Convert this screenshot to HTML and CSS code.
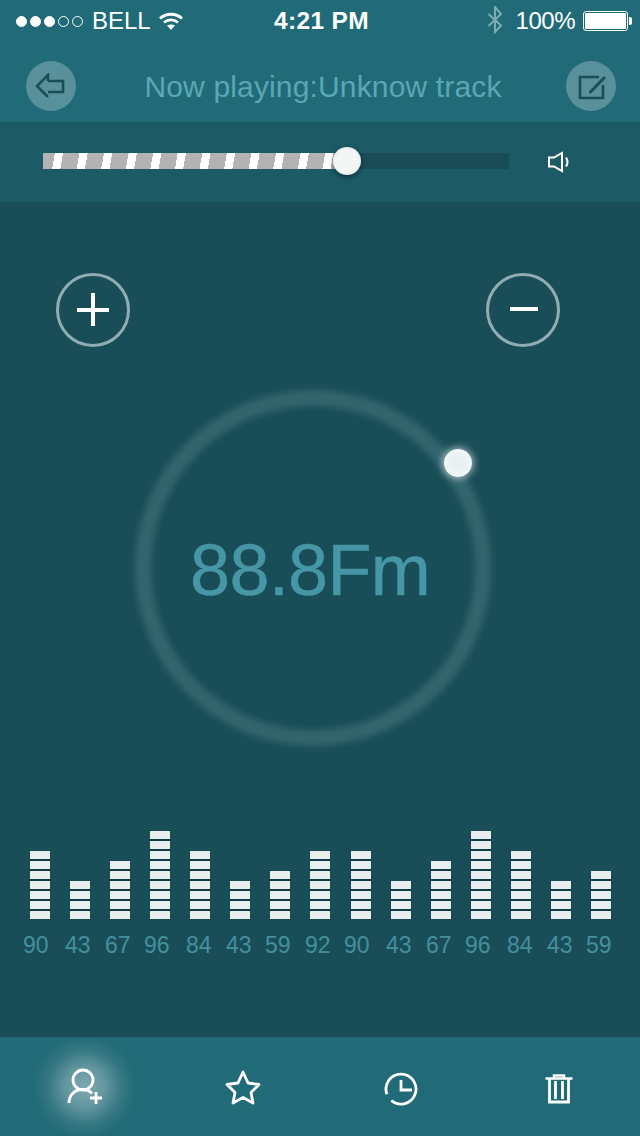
FILE: index.html
```html
<!DOCTYPE html>
<html lang="en">
<head>
  <meta charset="UTF-8">
  <title>Radio</title>
  <link rel="stylesheet" href="styles.css">
</head>
<body>

<div class="top">
  <div class="status">
    <div class="status-left">
      <span class="dots"><i class="dot on"></i><i class="dot on"></i><i class="dot on"></i><i class="dot"></i><i class="dot"></i></span>
      <span class="carrier">BELL</span>
      <svg class="wifi" width="24" height="18" viewBox="0 0 24 18">
        <path d="M1 6.500C7 .8 17 .8 23 6.500" fill="none" stroke="#fff" stroke-width="2.800"/>
        <path d="M5 10.500C9 7 15 7 19 10.500" fill="none" stroke="#fff" stroke-width="2.800"/>
        <path d="M8 13.500C10.500 12 13.500 12 16 13.500L12 18z" fill="#fff"/>
      </svg>
    </div>
    <div class="clock">4:21 PM</div>
    <div class="status-right">
      <svg class="bt" width="16" height="28" viewBox="0 0 16 28">
        <path d="M1.500 8L14 19.500 8 26V1l6 7L1.500 20" fill="none" stroke="#7fabb3" stroke-width="2"/>
      </svg>
      <span class="percent">100%</span>
      <span class="battery"><span class="battery-fill"></span></span>
    </div>
  </div>

  <div class="nav">
    <button class="round" type="button">
      <svg width="32" height="26" viewBox="0 0 32 26">
        <path d="M13 8V2L2 13l11 11M13 8h15v11H13" fill="none" stroke="#194e58" stroke-width="2.600"/>
      </svg>
    </button>
    <div class="title">Now playing:Unknow track</div>
    <button class="round" type="button">
      <svg width="30" height="28" viewBox="0 0 30 28">
        <path d="M23 5H4v21h23V13" fill="none" stroke="#194e58" stroke-width="2.600"/>
        <path d="M13.500 21L29 5" fill="none" stroke="#194e58" stroke-width="3"/>
      </svg>
    </button>
  </div>
</div>

<div class="volume">
  <div class="track">
    <div class="track-fill"></div>
    <div class="knob"></div>
  </div>
  <svg class="speaker" width="24" height="22" viewBox="0 0 24 22">
    <path d="M2 6.500h5L15 2v18l-8-4.500H2z" fill="none" stroke="#fff" stroke-width="2"/>
    <path d="M19 6.500c2 3 2 6 0 9" fill="none" stroke="#fff" stroke-width="2"/>
  </svg>
</div>

<div class="main">
  <div class="tune">
    <button class="circle" type="button"><span class="plus"></span></button>
    <button class="circle" type="button"><span class="minus"></span></button>
  </div>

  <div class="dial">
    <div class="ring"></div>
    <div class="freq">88.8Fm</div>
    <div class="dial-knob"></div>
  </div>

  <div class="bars">
    <div class="bar h7"></div>
    <div class="bar h4"></div>
    <div class="bar h6"></div>
    <div class="bar h9"></div>
    <div class="bar h7"></div>
    <div class="bar h4"></div>
    <div class="bar h5"></div>
    <div class="bar h7"></div>
    <div class="bar h7 bar-shift"></div>
    <div class="bar h4"></div>
    <div class="bar h6"></div>
    <div class="bar h9"></div>
    <div class="bar h7"></div>
    <div class="bar h4"></div>
    <div class="bar h5"></div>
  </div>

  <div class="nums">
    <span class="num w42">90</span>
    <span class="num">43</span>
    <span class="num w39">67</span>
    <span class="num w42">96</span>
    <span class="num">84</span>
    <span class="num w39">43</span>
    <span class="num">59</span>
    <span class="num w39">92</span>
    <span class="num w42">90</span>
    <span class="num">43</span>
    <span class="num w39">67</span>
    <span class="num w42">96</span>
    <span class="num">84</span>
    <span class="num w39">43</span>
    <span class="num">59</span>
  </div>
</div>

<div class="tabs">
  <div class="tab tab-active">
    <svg class="tab-icon" width="38" height="38" viewBox="0 0 38 38">
      <circle cx="17" cy="12" r="10" fill="none" stroke="#fff" stroke-width="2.800"/>
      <path d="M3 35c0-8 6-13.500 13-13.500 4 0 8 1.500 10 4" fill="none" stroke="#fff" stroke-width="2.800"/>
      <path d="M24 30h12M30 24v12" fill="none" stroke="#fff" stroke-width="2.800"/>
    </svg>
  </div>
  <div class="tab">
    <svg class="tab-icon" width="38" height="36" viewBox="0 0 38 36">
      <path d="M19 3l5 11 11 1.500-8 8 2 10.500-10-5.500L9 34l2-10.500-8-8L14 14z" fill="none" stroke="#fff" stroke-width="2.800" stroke-linejoin="round"/>
    </svg>
  </div>
  <div class="tab">
    <svg class="tab-icon icon-low" width="36" height="36" viewBox="0 0 36 36">
      <path d="M3.900 23.200A15 15 0 1 1 8.300 29.500" fill="none" stroke="#fff" stroke-width="2.800"/>
      <path d="M18 9v10h11" fill="none" stroke="#fff" stroke-width="2.800"/>
    </svg>
  </div>
  <div class="tab">
    <svg class="tab-icon icon-low" width="30" height="32" viewBox="0 0 30 32">
      <path d="M1.500 5.500h27M10 5.500V2.500h10v3" fill="none" stroke="#fff" stroke-width="2.400"/>
      <path d="M5.500 5.500V29h19V5.500M11.500 8v18M18.500 8v18" fill="none" stroke="#fff" stroke-width="2.800"/>
    </svg>
  </div>
</div>

</body>
</html>
```

FILE: styles.css
```css
* {
  box-sizing: border-box;
}
body {
  margin: 0;
  width: 640px;
  height: 1136px;
  overflow: hidden;
  font-family: "Liberation Sans", Arial, sans-serif;
  background: #194e58;
  display: flex;
  flex-direction: column;
}
button {
  padding: 0;
  border: none;
  background: none;
}

/* top */
.top {
  height: 122px;
  background: #216a77;
}
.status {
  height: 40px;
  padding: 2px 8px 0 16px;
  display: flex;
  align-items: center;
  color: #fff;
  font-size: 24px;
}
.status-left {
  display: flex;
  align-items: center;
  width: 258px;
}
.dots {
  display: flex;
  gap: 3px;
}
.dot {
  width: 11px;
  height: 11px;
  border-radius: 50%;
  border: 1px solid #fff;
}
.dot.on {
  background: #fff;
}
.carrier {
  margin-left: 9px;
}
.wifi {
  margin-left: 8px;
}
.clock {
  font-weight: bold;
  font-size: 24.5px;
  letter-spacing: 0.35px;
}
.status-right {
  flex: 1;
  display: flex;
  align-items: center;
  justify-content: flex-end;
  padding-right: 4px;
}
.bt {
  margin: -2px 13px 0 0;
}
.percent {
  letter-spacing: -0.5px;
}
.battery {
  margin-left: 8px;
  width: 45px;
  height: 20px;
  border: 1px solid #fff;
  border-radius: 3px;
  padding: 1px;
  position: relative;
}
.battery::after {
  content: "";
  position: absolute;
  right: -5px;
  top: 5px;
  width: 3px;
  height: 8px;
  background: #fff;
  border-radius: 0 2px 2px 0;
}
.battery-fill {
  display: block;
  height: 100%;
  background: #fff;
  border-radius: 1px;
}
.nav {
  padding: 21px 24px 0 26px;
  display: flex;
  justify-content: space-between;
  align-items: flex-start;
}
.round {
  width: 50px;
  height: 50px;
  border-radius: 50%;
  background: #58919c;
  display: flex;
  align-items: center;
  justify-content: center;
}
.title {
  margin-left: 4px;
  font-size: 30px;
  line-height: 52px;
  letter-spacing: 0.15px;
  color: #5aa7b5;
}

/* volume slider */
.volume {
  height: 80px;
  background: #1c5a65;
  padding: 31px 0 0 43px;
  display: flex;
  align-items: flex-start;
}
.track {
  width: 466px;
  height: 16px;
  background: #194c56;
  position: relative;
}
.track-fill {
  width: 304px;
  height: 16px;
  background: repeating-linear-gradient(100deg, #b3b3b3 0, #b3b3b3 11.700px, #fff 11.700px, #fff 19.800px, #b3b3b3 19.800px, #b3b3b3 24.200px);
}
.knob {
  position: absolute;
  left: 290px;
  top: -6px;
  width: 28px;
  height: 28px;
  border-radius: 50%;
  background: radial-gradient(circle, #f4f6f6 55%, #d5dadb 100%);
  box-shadow: 0 2px 5px rgba(0, 0, 0, 0.45);
}
.speaker {
  margin-left: 38px;
  margin-top: -2px;
}

/* main */
.main {
  height: 835px;
  position: relative;
}
.tune {
  padding: 71px 80px 0 56px;
  display: flex;
  justify-content: space-between;
}
.circle {
  width: 74px;
  height: 74px;
  border-radius: 50%;
  border: 3px solid #8fadb2;
  position: relative;
}
.plus,
.minus {
  position: absolute;
  left: 18px;
  top: 32px;
  width: 32px;
  height: 4px;
  background: #fff;
  box-shadow: 0 0 1px #0a2a30;
}
.minus {
  left: 21px;
  top: 31px;
  width: 28px;
}
.plus::after {
  content: "";
  position: absolute;
  left: 14px;
  top: -15px;
  width: 4px;
  height: 33px;
  background: #fff;
}
.dial {
  width: 360px;
  height: 360px;
  margin: 41px 0 0 133px;
  position: relative;
  display: flex;
  align-items: center;
  justify-content: center;
}
.ring {
  position: absolute;
  left: 2px;
  top: 2px;
  width: 356px;
  height: 356px;
  border-radius: 50%;
  border: 16px solid #33656d;
  filter: blur(3px);
}
.freq {
  font-size: 72px;
  letter-spacing: -0.7px;
  color: #4796a6;
  -webkit-text-stroke: 0.5px #4796a6;
  margin: 4px 0 0 -6px;
}
.dial-knob {
  position: absolute;
  left: 311px;
  top: 61px;
  width: 28px;
  height: 28px;
  border-radius: 50%;
  background: radial-gradient(circle, #e9f0f1 30%, #f7fafa 100%);
  box-shadow: 0 0 7px 2px rgba(255, 255, 255, 0.55);
  filter: blur(0.6px);
}
.bars {
  margin-top: 82px;
  padding-left: 30px;
  height: 89px;
  display: flex;
  gap: 20px;
  align-items: flex-end;
}
.bar {
  width: 20px;
  box-shadow: 0 0 1px #0e3a43;
  background: repeating-linear-gradient(to top, #e9eeee 0, #e9eeee 8px, #0e3a43 8px, #0e3a43 10px);
}
.bar-shift {
  margin-left: 1px;
}
.h4 { height: 38px; }
.h5 { height: 48px; }
.h6 { height: 58px; }
.h7 { height: 68px; }
.h9 { height: 88px; }
.nums {
  display: flex;
  padding-left: 23px;
  margin-top: 13px;
  font-size: 23px;
  color: #458f9d;
}
.num {
  width: 40px;
}
.w42 {
  width: 42px;
}
.w39 {
  width: 39px;
}

/* tab bar */
.tabs {
  height: 99px;
  background: #216a77;
  border-top: 1px solid #1f6571;
  display: flex;
  padding-left: 6px;
  align-items: center;
}
.tab {
  width: 158px;
  height: 98px;
  display: flex;
  align-items: center;
  justify-content: center;
}
.tab-icon {
  position: relative;
}
.icon-low {
  margin-top: 4px;
}
.tab-active {
  position: relative;
}
.tab-active::before {
  content: "";
  position: absolute;
  left: 27px;
  top: -3px;
  width: 104px;
  height: 104px;
  border-radius: 50%;
  background: radial-gradient(circle closest-side, rgba(255, 255, 255, 0.42) 0, rgba(255, 255, 255, 0.3) 38%, rgba(255, 255, 255, 0.09) 72%, rgba(255, 255, 255, 0) 100%);
}
```
